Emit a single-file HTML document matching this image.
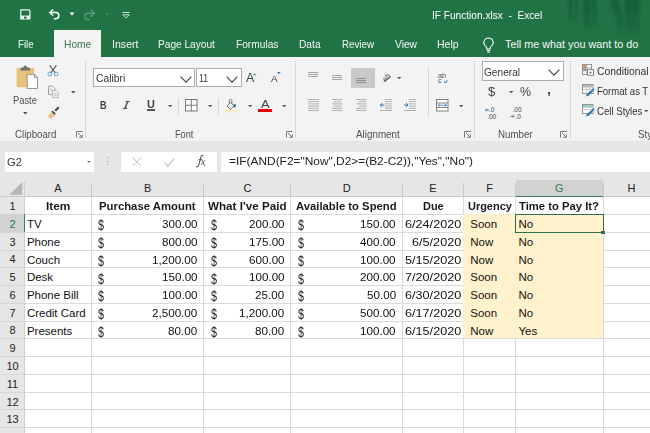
<!DOCTYPE html><html><head><meta charset="utf-8"><style>
*{margin:0;padding:0;box-sizing:border-box}
html,body{width:650px;height:433px;overflow:hidden;background:#fff;font-family:"Liberation Sans",sans-serif;position:relative}
.a{position:absolute}
.t{position:absolute;white-space:nowrap;line-height:1;transform-origin:0 0}
svg{position:absolute;overflow:visible}
</style></head><body><div class="a" style="left:0.00px;top:0.00px;width:650.00px;height:57.00px;background:#217346"></div>
<svg style="left:540px;top:0px" width="110" height="57" viewBox="0 0 110 57"><defs><linearGradient id="fd" x1="0" y1="0" x2="0" y2="1"><stop offset="0" stop-color="#0d3d22" stop-opacity="0.35"/><stop offset="0.7" stop-color="#0d3d22" stop-opacity="0.18"/><stop offset="1" stop-color="#0d3d22" stop-opacity="0"/></linearGradient><filter id="bl"><feGaussianBlur stdDeviation="0.8"/></filter></defs><g filter="url(#bl)" fill="url(#fd)"><rect x="28" y="0" width="10" height="24"/><rect x="33" y="0" width="2" height="20" fill="#2a8050" fill-opacity="0.3"/><rect x="43" y="0" width="8" height="34"/><rect x="52" y="0" width="5" height="30"/><path d="M70 0h8l6 18v20h-6l-2-18z"/><path d="M84 0h16v39h-14z"/></g></svg>
<svg style="left:19.5px;top:8.5px" width="11" height="11" viewBox="0 0 11 11"><path d="M0.8 0.8h8.2l0.9 0.9v8.2H0.8z" fill="none" stroke="#eef7f1" stroke-width="1.2"/><path d="M1 6.6h8.6v3.2H1z" fill="#eef7f1"/><rect x="4" y="7.6" width="2.6" height="2" fill="#217346"/></svg>
<svg style="left:48px;top:8px" width="13" height="12" viewBox="0 0 13 12"><path d="M2.5 4.5h5.3a3.1 3.1 0 0 1 0 6.2h-2" fill="none" stroke="#fff" stroke-width="1.5"/><path d="M5.1 1.5L1.8 4.5l3.3 3" fill="none" stroke="#fff" stroke-width="1.5"/></svg>
<svg style="left:69px;top:12px" width="6" height="4" viewBox="0 0 6 4"><path d="M0.5 0.5h5l-2.5 3z" fill="#fff"/></svg>
<svg style="left:84px;top:8px" width="12" height="12" viewBox="0 0 12 12"><path d="M9.5 5.2h-5.5a3.2 3.2 0 0 0 0 6.4h2" fill="none" stroke="#5a9c78" stroke-width="1.4"/><path d="M6.6 1.6l3.8 3.6l-3.8 3.6" fill="none" stroke="#5a9c78" stroke-width="1.4"/></svg>
<svg style="left:105px;top:12.5px" width="5" height="3" viewBox="0 0 5 3"><path d="M0.5 0.5h3.5l-1.75 2z" fill="#4f9270"/></svg>
<svg style="left:121.5px;top:12px" width="9" height="7" viewBox="0 0 9 7"><path d="M0.3 0.5h7.6" stroke="#d6e8dc" stroke-width="0.9"/><path d="M0.8 2.8h6.6l-3.3 3.3z" fill="none" stroke="#d6e8dc" stroke-width="0.9"/></svg>
<div class="t" style="left:431.70px;top:9.69px;font-size:11px;color:#fff;transform:scaleX(0.9199);">IF Function.xlsx&nbsp; - &nbsp;Excel</div>
<div class="a" style="left:54.00px;top:29.80px;width:47.00px;height:27.50px;background:#f3f3f3"></div>
<div class="t" style="left:18.40px;top:39.06px;font-size:10.8px;color:#f4f8f5;transform:scaleX(0.8966);">File</div>
<div class="t" style="left:63.70px;top:39.06px;font-size:10.8px;color:#3b7453;transform:scaleX(0.9479);">Home</div>
<div class="t" style="left:111.50px;top:39.06px;font-size:10.8px;color:#f4f8f5;transform:scaleX(0.9815);">Insert</div>
<div class="t" style="left:158.20px;top:39.06px;font-size:10.8px;color:#f4f8f5;transform:scaleX(0.9382);">Page Layout</div>
<div class="t" style="left:236.00px;top:39.06px;font-size:10.8px;color:#f4f8f5;transform:scaleX(0.9422);">Formulas</div>
<div class="t" style="left:299.20px;top:39.06px;font-size:10.8px;color:#f4f8f5;transform:scaleX(0.9453);">Data</div>
<div class="t" style="left:342.00px;top:39.06px;font-size:10.8px;color:#f4f8f5;transform:scaleX(0.9027);">Review</div>
<div class="t" style="left:394.80px;top:39.06px;font-size:10.8px;color:#f4f8f5;transform:scaleX(0.9462);">View</div>
<div class="t" style="left:437.20px;top:39.06px;font-size:10.8px;color:#f4f8f5;transform:scaleX(0.9730);">Help</div>
<svg style="left:482px;top:37px" width="13" height="16" viewBox="0 0 13 16"><path d="M6.5 1a4.6 4.6 0 0 0-2.6 8.4c.6.5.9 1.2.9 2v.6h3.4v-.6c0-.8.3-1.5.9-2A4.6 4.6 0 0 0 6.5 1z" fill="none" stroke="#fff" stroke-width="1.1"/><path d="M4.9 13.6h3.2M5.3 15.2h2.4" stroke="#fff" stroke-width="1.1"/></svg>
<div class="t" style="left:505.00px;top:39.06px;font-size:10.8px;color:#f4f8f5;">Tell me what you want to do</div>
<div class="a" style="left:0.00px;top:57.00px;width:650.00px;height:84.00px;background:#f3f3f3"></div>
<div class="a" style="left:85.00px;top:61.00px;width:1.00px;height:77.00px;background:#d6d6d6"></div>
<div class="a" style="left:295.00px;top:61.00px;width:1.00px;height:77.00px;background:#d6d6d6"></div>
<div class="a" style="left:474.00px;top:61.00px;width:1.00px;height:77.00px;background:#d6d6d6"></div>
<div class="a" style="left:570.00px;top:61.00px;width:1.00px;height:77.00px;background:#d6d6d6"></div>
<svg style="left:16px;top:65px" width="23" height="25" viewBox="0 0 23 25"><rect x="0.6" y="3" width="17.4" height="19.2" fill="#e8c17a"/><path d="M4.2 5.6l0.8-3h8.6l0.8 3z" fill="#6f6f6f"/><rect x="7.6" y="0.8" width="3.2" height="2.2" rx="0.6" fill="#6f6f6f"/><path d="M11.2 9.3h7.2l3.1 3.1v11.1h-10.3z" fill="#fff" stroke="#8a8a8a" stroke-width="0.9"/><path d="M18.4 9.3v3.1h3.1" fill="none" stroke="#8a8a8a" stroke-width="0.9"/></svg>
<div class="t" style="left:13.20px;top:94.96px;font-size:10.8px;color:#505050;transform:scaleX(0.8659);">Paste</div>
<svg style="left:23px;top:112px" width="5" height="3" viewBox="0 0 5 3"><path d="M0 0h4.6l-2.3 2.4z" fill="#555"/></svg>
<svg style="left:47px;top:65px" width="12" height="12" viewBox="0 0 12 12"><path d="M2.6 0.4l5.8 7.6M9.4 0.4L3.6 8" stroke="#555" stroke-width="1.1"/><circle cx="2.8" cy="9" r="1.9" fill="none" stroke="#5b9bd5" stroke-width="0.9"/><circle cx="9.2" cy="9" r="1.9" fill="none" stroke="#5b9bd5" stroke-width="0.9"/></svg>
<svg style="left:47px;top:85px" width="13" height="14" viewBox="0 0 13 14"><path d="M1.5 1.2h4.3l2 2v6.3H1.5z" fill="#f8f8f8" stroke="#999" stroke-width="0.9"/><path d="M2.5 4.2h3M2.5 6.2h3" stroke="#aaa" stroke-width="0.7"/><path d="M5.6 5.4h3.8l2 2v5.2H5.6z" fill="#f4f4f4" stroke="#a6b8b0" stroke-width="0.9"/><path d="M6.6 8.6h3.6M6.6 10.6h3.6" stroke="#aab" stroke-width="0.7"/></svg>
<svg style="left:70.5px;top:91px" width="5" height="3" viewBox="0 0 5 3"><path d="M0 0h4.6l-2.3 2.4z" fill="#555"/></svg>
<svg style="left:47px;top:106px" width="13" height="13" viewBox="0 0 13 13"><path d="M8.2 4.8l3.6-3.6" stroke="#505050" stroke-width="2.3"/><path d="M5.6 4.4l3.2 3.2l-1.6 1.6l-3.2-3.2z" fill="#505050"/><path d="M0.8 10.2l3.8-4.4l3.4 3.4l-4.4 3.8z" fill="#eac27c"/></svg>
<div class="t" style="left:15.00px;top:128.56px;font-size:10.8px;color:#505050;transform:scaleX(0.8973);">Clipboard</div>
<svg style="left:76px;top:131px" width="7" height="7" viewBox="0 0 7 7"><path d="M0.5 6.5V0.5h6" fill="none" stroke="#777" stroke-width="1"/><path d="M2 2l4 4M3.3 6.3h3v-3" fill="none" stroke="#777" stroke-width="1"/></svg>
<div class="a" style="left:93.30px;top:68.30px;width:101.50px;height:19.20px;background:#fff;border:1px solid #ababab"></div>
<div class="a" style="left:195.60px;top:68.30px;width:46.00px;height:19.20px;background:#fff;border:1px solid #ababab"></div>
<div class="t" style="left:96.00px;top:73.46px;font-size:10.8px;color:#333;transform:scaleX(0.9542);">Calibri</div>
<div class="t" style="left:199.00px;top:73.46px;font-size:10.8px;color:#333;transform:scaleX(0.8036);">11</div>
<svg style="left:180.4px;top:76px" width="12" height="7" viewBox="0 0 12 7"><path d="M0.6 0.6l5.4 5.6l5.4-5.6" fill="none" stroke="#444" stroke-width="1.1"/></svg>
<svg style="left:226px;top:76px" width="12" height="7" viewBox="0 0 12 7"><path d="M0.6 0.6l5.4 5.6l5.4-5.6" fill="none" stroke="#444" stroke-width="1.1"/></svg>
<div class="t" style="left:246.00px;top:72.27px;font-size:12.2px;color:#444;transform:scaleX(1.0184);">A</div>
<svg style="left:252.8px;top:72.6px" width="4" height="3" viewBox="0 0 4 3"><path d="M0 2.2l1.8-1.9l1.8 1.9z" fill="#3c9c8c"/></svg>
<div class="t" style="left:270.50px;top:74.47px;font-size:9.6px;color:#444;transform:scaleX(1.0312);">A</div>
<svg style="left:276.5px;top:72.4px" width="4" height="3" viewBox="0 0 4 3"><path d="M0 0h3.8l-1.9 2z" fill="#2e75b6"/></svg>
<div class="t" style="left:99.70px;top:99.81px;font-size:10.5px;color:#444;font-weight:bold;transform:scaleX(0.8684);">B</div>
<svg style="left:123px;top:101px" width="7" height="8" viewBox="0 0 7 8"><path d="M4.6 0.4L2 7.6" stroke="#555" stroke-width="1.5"/><path d="M2.6 0.6h4M0.2 7.4h4" stroke="#555" stroke-width="1.1"/></svg>
<div class="t" style="left:146.50px;top:99.31px;font-size:10.5px;color:#444;font-weight:bold;transform:scaleX(1.0395);">U</div>
<div class="a" style="left:146.50px;top:109.40px;width:8.00px;height:1.20px;background:#555"></div>
<svg style="left:167.5px;top:105px" width="5" height="3" viewBox="0 0 5 3"><path d="M0 0h4.4l-2.2 2.2z" fill="#555"/></svg>
<div class="a" style="left:178.00px;top:97.50px;width:1.00px;height:17.00px;background:#d6d6d6"></div>
<svg style="left:184.5px;top:99px" width="13" height="13" viewBox="0 0 13 13"><rect x="0.5" y="0.5" width="11.5" height="11.5" fill="#fff" stroke="#777" stroke-width="1"/><path d="M6.25 0.5v11.5M0.5 6.25h11.5" stroke="#777" stroke-width="1"/></svg>
<svg style="left:207.7px;top:105px" width="5" height="3" viewBox="0 0 5 3"><path d="M0 0h4.4l-2.2 2.2z" fill="#555"/></svg>
<div class="a" style="left:218.00px;top:97.50px;width:1.00px;height:17.00px;background:#d6d6d6"></div>
<svg style="left:223px;top:98px" width="16" height="15" viewBox="0 0 16 15"><path d="M4 8l3.5-3.5l3.5 3.5l-3.5 3.5z" fill="#fff" stroke="#5a5a5a" stroke-width="0.9"/><path d="M6.3 5.6V2.8a1.3 1.3 0 0 1 2.6 0V6.4" fill="none" stroke="#666" stroke-width="0.9"/><ellipse cx="11.8" cy="7.8" rx="1.2" ry="2" fill="#2f8a8a"/><rect x="1" y="12" width="14" height="2.2" fill="#fef0c4"/></svg>
<svg style="left:247.7px;top:105px" width="5" height="3" viewBox="0 0 5 3"><path d="M0 0h4.4l-2.2 2.2z" fill="#555"/></svg>
<div class="t" style="left:260.60px;top:99.41px;font-size:10.5px;color:#444;transform:scaleX(1.2286);">A</div>
<div class="a" style="left:257.70px;top:108.90px;width:14.30px;height:3.20px;background:#e00000"></div>
<svg style="left:281.7px;top:105px" width="5" height="3" viewBox="0 0 5 3"><path d="M0 0h4.4l-2.2 2.2z" fill="#555"/></svg>
<div class="t" style="left:174.80px;top:128.86px;font-size:10.8px;color:#505050;transform:scaleX(0.8519);">Font</div>
<svg style="left:286px;top:131px" width="7" height="7" viewBox="0 0 7 7"><path d="M0.5 6.5V0.5h6" fill="none" stroke="#777" stroke-width="1"/><path d="M2 2l4 4M3.3 6.3h3v-3" fill="none" stroke="#777" stroke-width="1"/></svg>
<div class="a" style="left:351.30px;top:67.90px;width:23.50px;height:19.80px;background:#c9c9c9"></div>
<svg style="left:308px;top:72px" width="12" height="6" viewBox="0 0 12 6"><path d="M0 0.5h10M0 2.5h10M0 4.5h10" stroke="#9a9a9a" stroke-width="0.9"/></svg>
<svg style="left:332.2px;top:75px" width="12" height="6" viewBox="0 0 12 6"><path d="M0 0.5h10M0 2.5h10M0 4.5h10" stroke="#9a9a9a" stroke-width="0.9"/></svg>
<svg style="left:355.8px;top:78px" width="12" height="6" viewBox="0 0 12 6"><path d="M0 0.5h10M0 2.5h10M0 4.5h10" stroke="#888" stroke-width="0.9"/></svg>
<svg style="left:380px;top:71px" width="13" height="13" viewBox="0 0 13 13"><text x="1.5" y="9" font-size="7.5" font-family="Liberation Sans" fill="#555" transform="rotate(-45 6 6)">ab</text><path d="M3.7 10.7L10.9 5.8" stroke="#555" stroke-width="1"/></svg>
<svg style="left:396.7px;top:77px" width="5" height="3" viewBox="0 0 5 3"><path d="M0 0h4.4l-2.2 2.2z" fill="#555"/></svg>
<div class="t" style="left:437.90px;top:71.74px;font-size:7.4px;color:#555;transform:scaleX(0.9939);">ab</div>
<svg style="left:437.5px;top:78px" width="11" height="6" viewBox="0 0 11 6"><text x="0" y="5.2" font-size="7.4" font-family="Liberation Sans" fill="#555">c</text><path d="M8.8 2v2.2h-2.6M7.1 3.3l-0.9 0.9l0.9 0.9" fill="none" stroke="#2e75b6" stroke-width="0.8"/></svg>
<svg style="left:307.5px;top:98.8px" width="12" height="12" viewBox="0 0 12 12"><path d="M0 0.5h11" stroke="#a0a0a0" stroke-width="0.8"/><path d="M0 2.7h11" stroke="#a0a0a0" stroke-width="0.8"/><path d="M0 4.9h11" stroke="#a0a0a0" stroke-width="0.8"/><path d="M0 7.1h11" stroke="#a0a0a0" stroke-width="0.8"/><path d="M0 9.3h11" stroke="#a0a0a0" stroke-width="0.8"/><path d="M0 11.5h11" stroke="#a0a0a0" stroke-width="0.8"/></svg>
<svg style="left:331.8px;top:98.8px" width="12" height="12" viewBox="0 0 12 12"><path d="M0 0.5h10.5" stroke="#a0a0a0" stroke-width="0.8"/><path d="M1.5 2.7h7.5" stroke="#a0a0a0" stroke-width="0.8"/><path d="M0 4.9h10.5" stroke="#a0a0a0" stroke-width="0.8"/><path d="M1.5 7.1h7.5" stroke="#a0a0a0" stroke-width="0.8"/><path d="M0 9.3h10.5" stroke="#a0a0a0" stroke-width="0.8"/><path d="M0 11.5h10.5" stroke="#a0a0a0" stroke-width="0.8"/></svg>
<svg style="left:355.8px;top:98.8px" width="12" height="12" viewBox="0 0 12 12"><path d="M0 0.5h10.5" stroke="#a0a0a0" stroke-width="0.8"/><path d="M3 2.7h7.5" stroke="#a0a0a0" stroke-width="0.8"/><path d="M0 4.9h10.5" stroke="#a0a0a0" stroke-width="0.8"/><path d="M3 7.1h7.5" stroke="#a0a0a0" stroke-width="0.8"/><path d="M0 9.3h10.5" stroke="#a0a0a0" stroke-width="0.8"/><path d="M0 11.5h10.5" stroke="#a0a0a0" stroke-width="0.8"/></svg>
<svg style="left:380px;top:98.8px" width="13" height="12" viewBox="0 0 13 12"><path d="M5 0.5h7M5 2.7h7M5 4.9h7M5 7.1h7M5 9.3h7M0 11.5h12" stroke="#a0a0a0" stroke-width="0.8"/><path d="M0.3 6h4M2.3 4l-2 2l2 2" fill="none" stroke="#2e75b6" stroke-width="1"/></svg>
<svg style="left:404px;top:98.8px" width="13" height="12" viewBox="0 0 13 12"><path d="M5 0.5h7M5 2.7h7M5 4.9h7M5 7.1h7M5 9.3h7M0 11.5h12" stroke="#a0a0a0" stroke-width="0.8"/><path d="M0 6h4M2 4l2 2l-2 2" fill="none" stroke="#2e75b6" stroke-width="1"/></svg>
<div class="a" style="left:428.30px;top:67.00px;width:1.00px;height:50.00px;background:#d6d6d6"></div>
<svg style="left:435.6px;top:98.8px" width="13" height="13" viewBox="0 0 13 13"><rect x="0.5" y="0.5" width="11.5" height="11.5" fill="#fff" stroke="#777" stroke-width="0.9"/><path d="M0.5 4h11.5M0.5 8.5h11.5" stroke="#777" stroke-width="0.9"/><path d="M2 6.25h8.5M3.5 5l-1.5 1.25l1.5 1.25M9 5l1.5 1.25l-1.5 1.25" fill="none" stroke="#2e75b6" stroke-width="0.8"/></svg>
<svg style="left:459px;top:105px" width="5" height="3" viewBox="0 0 5 3"><path d="M0 0h4.4l-2.2 2.2z" fill="#555"/></svg>
<div class="t" style="left:356.40px;top:128.56px;font-size:10.8px;color:#505050;transform:scaleX(0.9116);">Alignment</div>
<svg style="left:464px;top:131px" width="7" height="7" viewBox="0 0 7 7"><path d="M0.5 6.5V0.5h6" fill="none" stroke="#777" stroke-width="1"/><path d="M2 2l4 4M3.3 6.3h3v-3" fill="none" stroke="#777" stroke-width="1"/></svg>
<div class="a" style="left:481.90px;top:61.10px;width:81.70px;height:19.70px;background:#fff;border:1px solid #ababab"></div>
<div class="t" style="left:484.40px;top:66.66px;font-size:10.8px;color:#333;transform:scaleX(0.9375);">General</div>
<svg style="left:548px;top:68.5px" width="12" height="7" viewBox="0 0 12 7"><path d="M0.6 0.6l5.4 5.6l5.4-5.6" fill="none" stroke="#444" stroke-width="1.1"/></svg>
<div class="t" style="left:488.00px;top:85.92px;font-size:12.5px;color:#444;transform:scaleX(1.0360);">$</div>
<svg style="left:508.8px;top:90.5px" width="5" height="3" viewBox="0 0 5 3"><path d="M0 0h4.4l-2.2 2.2z" fill="#555"/></svg>
<div class="t" style="left:519.80px;top:86.34px;font-size:12px;color:#444;transform:scaleX(1.0329);">%</div>
<div class="t" style="left:546.50px;top:82.50px;font-size:13px;color:#444;font-weight:bold;transform:scaleX(1.1111);">,</div>
<svg style="left:485px;top:105.5px" width="14" height="14" viewBox="0 0 14 14"><text x="4" y="5.8" font-size="6.5" font-family="Liberation Sans" fill="#444">.0</text><text x="2.2" y="12.5" font-size="6.5" font-family="Liberation Sans" fill="#444">.00</text><path d="M0.5 4h3.5M1.8 2.6L0.5 4l1.3 1.4" fill="none" stroke="#2e75b6" stroke-width="0.9"/></svg>
<svg style="left:510px;top:105.5px" width="14" height="14" viewBox="0 0 14 14"><text x="2.5" y="5.8" font-size="6.5" font-family="Liberation Sans" fill="#444">.00</text><text x="5.5" y="12.5" font-size="6.5" font-family="Liberation Sans" fill="#444">.0</text><path d="M0.5 10.3h3.5M2.7 8.9L4 10.3l-1.3 1.4" fill="none" stroke="#2e75b6" stroke-width="0.9"/></svg>
<div class="t" style="left:497.70px;top:128.86px;font-size:10.8px;color:#505050;transform:scaleX(0.9010);">Number</div>
<svg style="left:560px;top:131px" width="7" height="7" viewBox="0 0 7 7"><path d="M0.5 6.5V0.5h6" fill="none" stroke="#777" stroke-width="1"/><path d="M2 2l4 4M3.3 6.3h3v-3" fill="none" stroke="#777" stroke-width="1"/></svg>
<svg style="left:582px;top:64px" width="12" height="12" viewBox="0 0 12 12"><rect x="0.5" y="0.5" width="9" height="10" fill="#fff" stroke="#8a8a8a" stroke-width="0.9"/><rect x="1" y="1" width="3.5" height="3" fill="#d99a4e"/><rect x="1" y="4.2" width="3.5" height="3" fill="#8aa0b4"/><path d="M0.5 3.9h9M4.8 0.5v10" stroke="#9a9a9a" stroke-width="0.7"/><rect x="5.5" y="5.6" width="6" height="5.6" fill="#fff" stroke="#777" stroke-width="0.9"/><rect x="7.7" y="7.7" width="1.6" height="1.6" fill="#444"/></svg>
<div class="t" style="left:597.40px;top:65.69px;font-size:11px;color:#333;transform:scaleX(0.9373);">Conditional</div>
<svg style="left:582px;top:84px" width="13" height="13" viewBox="0 0 13 13"><rect x="0.5" y="0.5" width="10.5" height="9" fill="#fff" stroke="#8a8a8a" stroke-width="0.9"/><rect x="1" y="1" width="9.5" height="2.4" fill="#b8b8b8"/><path d="M0.5 5.6h10.5M4 0.5v9M7.5 0.5v9" stroke="#b5b5b5" stroke-width="0.7"/><path d="M3.6 12.4l1.6-2.6l6.4-5.6l1 1l-5.6 6.4z" fill="#2e75b6"/></svg>
<div class="t" style="left:597.40px;top:85.99px;font-size:11px;color:#333;transform:scaleX(0.8663);">Format as T</div>
<svg style="left:582px;top:104px" width="13" height="13" viewBox="0 0 13 13"><rect x="0.5" y="0.5" width="10.5" height="9" fill="#fff" stroke="#8a8a8a" stroke-width="0.9"/><rect x="1" y="1" width="9.5" height="2.6" fill="#9fc7bd"/><path d="M0.5 5.6h10.5" stroke="#b5b5b5" stroke-width="0.7"/><path d="M3.6 12.4l1.6-2.6l6.4-5.6l1 1l-5.6 6.4z" fill="#2e75b6"/></svg>
<div class="t" style="left:597.40px;top:105.99px;font-size:11px;color:#333;transform:scaleX(0.8739);">Cell Styles</div>
<svg style="left:644px;top:110px" width="5" height="3" viewBox="0 0 5 3"><path d="M0 0h4.4l-2.2 2.2z" fill="#555"/></svg>
<div class="t" style="left:638.40px;top:128.86px;font-size:10.8px;color:#505050;transform:scaleX(0.8974);">Sty</div>
<div class="a" style="left:0.00px;top:141.00px;width:650.00px;height:56.00px;background:#e6e6e6"></div>
<div class="a" style="left:4.60px;top:151.80px;width:89.50px;height:19.80px;background:#fff"></div>
<div class="t" style="left:7.40px;top:156.56px;font-size:10.8px;color:#333;transform:scaleX(1.0278);">G2</div>
<svg style="left:87px;top:160.5px" width="4" height="2" viewBox="0 0 4 2"><path d="M0 0h3.8l-1.9 1.8z" fill="#666"/></svg>
<div class="a" style="left:106.50px;top:157.00px;width:1.20px;height:1.20px;background:#999"></div>
<div class="a" style="left:106.50px;top:160.50px;width:1.20px;height:1.20px;background:#999"></div>
<div class="a" style="left:106.50px;top:164.00px;width:1.20px;height:1.20px;background:#999"></div>
<div class="a" style="left:121.00px;top:151.80px;width:96.00px;height:19.80px;background:#fff"></div>
<svg style="left:132px;top:157px" width="10" height="10" viewBox="0 0 10 10"><path d="M0.5 0.5l8.5 8.5M9 0.5L0.5 9" stroke="#bbb" stroke-width="1"/></svg>
<svg style="left:163.5px;top:158px" width="11" height="9" viewBox="0 0 11 9"><path d="M0.5 4.5l3.2 3.6L10.3 0.6" fill="none" stroke="#bbb" stroke-width="1.1"/></svg>
<svg style="left:195px;top:154px" width="12" height="14" viewBox="0 0 12 14"><path d="M1.2 12.4c1.2 0.6 2 0.2 2.5-1.2l2.3-8.4c0.4-1.3 1.2-1.6 2.4-1.1" fill="none" stroke="#555" stroke-width="1.1"/><path d="M3.6 5.6h3.4" stroke="#555" stroke-width="0.9"/><path d="M6.2 6.2c0.8-0.3 1.2 0 1.5 1l1.4 3.6c0.3 0.8 0.7 1 1.3 0.7M10 6.3l-3.8 4.6" fill="none" stroke="#555" stroke-width="0.9"/></svg>
<div class="a" style="left:220.50px;top:151.80px;width:440.00px;height:19.80px;background:#fff"></div>
<div class="t" style="left:229.00px;top:155.77px;font-size:11.5px;color:#222;transform:scaleX(1.0357);">=IF(AND(F2="Now",D2&gt;=(B2-C2)),"Yes","No")</div>
<div class="a" style="left:0.00px;top:196.50px;width:24.50px;height:240.00px;background:#e6e6e6"></div>
<div class="a" style="left:24.50px;top:196.50px;width:640.00px;height:240.00px;background:#fff"></div>
<div class="a" style="left:91.00px;top:196.00px;width:1.00px;height:240.00px;background:#dadada"></div>
<div class="a" style="left:91.00px;top:183.00px;width:1.00px;height:13.00px;background:#c8c8c8"></div>
<div class="a" style="left:203.00px;top:196.00px;width:1.00px;height:240.00px;background:#dadada"></div>
<div class="a" style="left:203.00px;top:183.00px;width:1.00px;height:13.00px;background:#c8c8c8"></div>
<div class="a" style="left:290.00px;top:196.00px;width:1.00px;height:240.00px;background:#dadada"></div>
<div class="a" style="left:290.00px;top:183.00px;width:1.00px;height:13.00px;background:#c8c8c8"></div>
<div class="a" style="left:402.00px;top:196.00px;width:1.00px;height:240.00px;background:#dadada"></div>
<div class="a" style="left:402.00px;top:183.00px;width:1.00px;height:13.00px;background:#c8c8c8"></div>
<div class="a" style="left:463.00px;top:196.00px;width:1.00px;height:240.00px;background:#dadada"></div>
<div class="a" style="left:463.00px;top:183.00px;width:1.00px;height:13.00px;background:#c8c8c8"></div>
<div class="a" style="left:515.00px;top:196.00px;width:1.00px;height:240.00px;background:#dadada"></div>
<div class="a" style="left:515.00px;top:183.00px;width:1.00px;height:13.00px;background:#c8c8c8"></div>
<div class="a" style="left:603.00px;top:196.00px;width:1.00px;height:240.00px;background:#dadada"></div>
<div class="a" style="left:603.00px;top:183.00px;width:1.00px;height:13.00px;background:#c8c8c8"></div>
<div class="a" style="left:24.00px;top:182.00px;width:1.00px;height:251.00px;background:#cfcfcf"></div>
<div class="a" style="left:0.00px;top:196.00px;width:650.00px;height:1.00px;background:#c8c8c8"></div>
<div class="a" style="left:25.00px;top:214.00px;width:640.00px;height:1.00px;background:#dadada"></div>
<div class="a" style="left:0.00px;top:214.00px;width:24.00px;height:1.00px;background:#d6d6d6"></div>
<div class="a" style="left:25.00px;top:232.00px;width:640.00px;height:1.00px;background:#dadada"></div>
<div class="a" style="left:0.00px;top:232.00px;width:24.00px;height:1.00px;background:#d6d6d6"></div>
<div class="a" style="left:25.00px;top:250.00px;width:640.00px;height:1.00px;background:#dadada"></div>
<div class="a" style="left:0.00px;top:250.00px;width:24.00px;height:1.00px;background:#d6d6d6"></div>
<div class="a" style="left:25.00px;top:267.00px;width:640.00px;height:1.00px;background:#dadada"></div>
<div class="a" style="left:0.00px;top:267.00px;width:24.00px;height:1.00px;background:#d6d6d6"></div>
<div class="a" style="left:25.00px;top:285.00px;width:640.00px;height:1.00px;background:#dadada"></div>
<div class="a" style="left:0.00px;top:285.00px;width:24.00px;height:1.00px;background:#d6d6d6"></div>
<div class="a" style="left:25.00px;top:303.00px;width:640.00px;height:1.00px;background:#dadada"></div>
<div class="a" style="left:0.00px;top:303.00px;width:24.00px;height:1.00px;background:#d6d6d6"></div>
<div class="a" style="left:25.00px;top:321.00px;width:640.00px;height:1.00px;background:#dadada"></div>
<div class="a" style="left:0.00px;top:321.00px;width:24.00px;height:1.00px;background:#d6d6d6"></div>
<div class="a" style="left:25.00px;top:338.00px;width:640.00px;height:1.00px;background:#dadada"></div>
<div class="a" style="left:0.00px;top:338.00px;width:24.00px;height:1.00px;background:#d6d6d6"></div>
<div class="a" style="left:25.00px;top:356.00px;width:640.00px;height:1.00px;background:#dadada"></div>
<div class="a" style="left:0.00px;top:356.00px;width:24.00px;height:1.00px;background:#d6d6d6"></div>
<div class="a" style="left:25.00px;top:374.00px;width:640.00px;height:1.00px;background:#dadada"></div>
<div class="a" style="left:0.00px;top:374.00px;width:24.00px;height:1.00px;background:#d6d6d6"></div>
<div class="a" style="left:25.00px;top:392.00px;width:640.00px;height:1.00px;background:#dadada"></div>
<div class="a" style="left:0.00px;top:392.00px;width:24.00px;height:1.00px;background:#d6d6d6"></div>
<div class="a" style="left:25.00px;top:409.00px;width:640.00px;height:1.00px;background:#dadada"></div>
<div class="a" style="left:0.00px;top:409.00px;width:24.00px;height:1.00px;background:#d6d6d6"></div>
<div class="a" style="left:25.00px;top:427.00px;width:640.00px;height:1.00px;background:#dadada"></div>
<div class="a" style="left:0.00px;top:427.00px;width:24.00px;height:1.00px;background:#d6d6d6"></div>
<div class="a" style="left:25.00px;top:445.00px;width:640.00px;height:1.00px;background:#dadada"></div>
<div class="a" style="left:0.00px;top:445.00px;width:24.00px;height:1.00px;background:#d6d6d6"></div>
<div class="a" style="left:463.00px;top:214.00px;width:140.00px;height:124.00px;background:#fff2cc"></div>
<svg style="left:9px;top:182px" width="14" height="13" viewBox="0 0 14 13"><path d="M13.2 0.2V12.7H0.2z" fill="#b5b5b5"/></svg>
<div class="t" style="left:54.23px;top:183.19px;font-size:11px;color:#222;">A</div>
<div class="t" style="left:143.97px;top:183.19px;font-size:11px;color:#222;">B</div>
<div class="t" style="left:243.53px;top:183.19px;font-size:11px;color:#222;">C</div>
<div class="t" style="left:342.67px;top:183.19px;font-size:11px;color:#222;">D</div>
<div class="t" style="left:429.22px;top:183.19px;font-size:11px;color:#222;">E</div>
<div class="t" style="left:486.15px;top:183.19px;font-size:11px;color:#222;">F</div>
<div class="a" style="left:515.50px;top:180.00px;width:87.50px;height:16.50px;background:#d2d2d2;border-bottom:1.5px solid #3b7d57"></div>
<div class="t" style="left:554.98px;top:183.19px;font-size:11px;color:#3f7a58;">G</div>
<div class="t" style="left:627.52px;top:183.19px;font-size:11px;color:#222;">H</div>
<div class="t" style="left:9.45px;top:201.09px;font-size:11px;color:#222;">1</div>
<div class="a" style="left:0.00px;top:214.27px;width:24.50px;height:17.77px;background:#d2d2d2;border-right:1.5px solid #3b7d57"></div>
<div class="t" style="left:9.45px;top:218.86px;font-size:11px;color:#217346;">2</div>
<div class="t" style="left:9.45px;top:236.63px;font-size:11px;color:#222;">3</div>
<div class="t" style="left:9.45px;top:254.40px;font-size:11px;color:#222;">4</div>
<div class="t" style="left:9.45px;top:272.17px;font-size:11px;color:#222;">5</div>
<div class="t" style="left:9.45px;top:289.94px;font-size:11px;color:#222;">6</div>
<div class="t" style="left:9.45px;top:307.71px;font-size:11px;color:#222;">7</div>
<div class="t" style="left:9.45px;top:325.48px;font-size:11px;color:#222;">8</div>
<div class="t" style="left:9.45px;top:343.25px;font-size:11px;color:#222;">9</div>
<div class="t" style="left:6.38px;top:361.02px;font-size:11px;color:#222;">10</div>
<div class="t" style="left:6.80px;top:378.79px;font-size:11px;color:#222;">11</div>
<div class="t" style="left:6.38px;top:396.56px;font-size:11px;color:#222;">12</div>
<div class="t" style="left:6.38px;top:414.33px;font-size:11px;color:#222;">13</div>
<div class="t" style="left:45.70px;top:201.37px;font-size:11.5px;color:#1a1a1a;font-weight:bold;transform:scaleX(1.0317);">Item</div>
<div class="t" style="left:99.35px;top:201.37px;font-size:11.5px;color:#1a1a1a;font-weight:bold;transform:scaleX(0.9857);">Purchase Amount</div>
<div class="t" style="left:208.25px;top:201.37px;font-size:11.5px;color:#1a1a1a;font-weight:bold;transform:scaleX(1.0129);">What I&#39;ve Paid</div>
<div class="t" style="left:296.35px;top:201.37px;font-size:11.5px;color:#1a1a1a;font-weight:bold;transform:scaleX(0.9819);">Available to Spend</div>
<div class="t" style="left:422.55px;top:201.37px;font-size:11.5px;color:#1a1a1a;font-weight:bold;transform:scaleX(0.9517);">Due</div>
<div class="t" style="left:467.60px;top:201.37px;font-size:11.5px;color:#1a1a1a;font-weight:bold;transform:scaleX(0.9522);">Urgency</div>
<div class="t" style="left:519.25px;top:201.37px;font-size:11.5px;color:#1a1a1a;font-weight:bold;transform:scaleX(0.9804);">Time to Pay It?</div>
<div class="t" style="left:26.90px;top:219.14px;font-size:11.5px;color:#111;">TV</div>
<div class="t" style="left:98.30px;top:218.22px;font-size:14px;color:#1a1a1a;transform:scaleX(0.7692);">$</div>
<div class="t" style="left:161.88px;top:219.14px;font-size:11.5px;color:#111;transform:scaleX(1.0120);">300.00</div>
<div class="t" style="left:211.00px;top:218.22px;font-size:14px;color:#1a1a1a;transform:scaleX(0.7692);">$</div>
<div class="t" style="left:248.88px;top:219.14px;font-size:11.5px;color:#111;transform:scaleX(1.0120);">200.00</div>
<div class="t" style="left:298.00px;top:218.22px;font-size:14px;color:#1a1a1a;transform:scaleX(0.7692);">$</div>
<div class="t" style="left:360.18px;top:219.14px;font-size:11.5px;color:#111;transform:scaleX(1.0120);">150.00</div>
<div class="t" style="left:404.74px;top:219.14px;font-size:11.5px;color:#111;transform:scaleX(1.1000);">6/24/2020</div>
<div class="t" style="left:470.30px;top:219.14px;font-size:11.5px;color:#111;">Soon</div>
<div class="t" style="left:518.50px;top:219.14px;font-size:11.5px;color:#111;">No</div>
<div class="t" style="left:26.90px;top:236.91px;font-size:11.5px;color:#111;">Phone</div>
<div class="t" style="left:98.30px;top:235.99px;font-size:14px;color:#1a1a1a;transform:scaleX(0.7692);">$</div>
<div class="t" style="left:161.88px;top:236.91px;font-size:11.5px;color:#111;transform:scaleX(1.0120);">800.00</div>
<div class="t" style="left:211.00px;top:235.99px;font-size:14px;color:#1a1a1a;transform:scaleX(0.7692);">$</div>
<div class="t" style="left:248.88px;top:236.91px;font-size:11.5px;color:#111;transform:scaleX(1.0120);">175.00</div>
<div class="t" style="left:298.00px;top:235.99px;font-size:14px;color:#1a1a1a;transform:scaleX(0.7692);">$</div>
<div class="t" style="left:360.18px;top:236.91px;font-size:11.5px;color:#111;transform:scaleX(1.0120);">400.00</div>
<div class="t" style="left:411.77px;top:236.91px;font-size:11.5px;color:#111;transform:scaleX(1.1000);">6/5/2020</div>
<div class="t" style="left:470.30px;top:236.91px;font-size:11.5px;color:#111;">Now</div>
<div class="t" style="left:518.50px;top:236.91px;font-size:11.5px;color:#111;">No</div>
<div class="t" style="left:26.90px;top:254.68px;font-size:11.5px;color:#111;">Couch</div>
<div class="t" style="left:98.30px;top:253.76px;font-size:14px;color:#1a1a1a;transform:scaleX(0.7692);">$</div>
<div class="t" style="left:152.21px;top:254.68px;font-size:11.5px;color:#111;transform:scaleX(1.0120);">1,200.00</div>
<div class="t" style="left:211.00px;top:253.76px;font-size:14px;color:#1a1a1a;transform:scaleX(0.7692);">$</div>
<div class="t" style="left:248.88px;top:254.68px;font-size:11.5px;color:#111;transform:scaleX(1.0120);">600.00</div>
<div class="t" style="left:298.00px;top:253.76px;font-size:14px;color:#1a1a1a;transform:scaleX(0.7692);">$</div>
<div class="t" style="left:360.18px;top:254.68px;font-size:11.5px;color:#111;transform:scaleX(1.0120);">100.00</div>
<div class="t" style="left:404.74px;top:254.68px;font-size:11.5px;color:#111;transform:scaleX(1.1000);">5/15/2020</div>
<div class="t" style="left:470.30px;top:254.68px;font-size:11.5px;color:#111;">Now</div>
<div class="t" style="left:518.50px;top:254.68px;font-size:11.5px;color:#111;">No</div>
<div class="t" style="left:26.90px;top:272.45px;font-size:11.5px;color:#111;">Desk</div>
<div class="t" style="left:98.30px;top:271.53px;font-size:14px;color:#1a1a1a;transform:scaleX(0.7692);">$</div>
<div class="t" style="left:161.88px;top:272.45px;font-size:11.5px;color:#111;transform:scaleX(1.0120);">150.00</div>
<div class="t" style="left:211.00px;top:271.53px;font-size:14px;color:#1a1a1a;transform:scaleX(0.7692);">$</div>
<div class="t" style="left:248.88px;top:272.45px;font-size:11.5px;color:#111;transform:scaleX(1.0120);">100.00</div>
<div class="t" style="left:298.00px;top:271.53px;font-size:14px;color:#1a1a1a;transform:scaleX(0.7692);">$</div>
<div class="t" style="left:360.18px;top:272.45px;font-size:11.5px;color:#111;transform:scaleX(1.0120);">200.00</div>
<div class="t" style="left:404.74px;top:272.45px;font-size:11.5px;color:#111;transform:scaleX(1.1000);">7/20/2020</div>
<div class="t" style="left:470.30px;top:272.45px;font-size:11.5px;color:#111;">Soon</div>
<div class="t" style="left:518.50px;top:272.45px;font-size:11.5px;color:#111;">No</div>
<div class="t" style="left:26.90px;top:290.22px;font-size:11.5px;color:#111;">Phone Bill</div>
<div class="t" style="left:98.30px;top:289.30px;font-size:14px;color:#1a1a1a;transform:scaleX(0.7692);">$</div>
<div class="t" style="left:161.88px;top:290.22px;font-size:11.5px;color:#111;transform:scaleX(1.0120);">100.00</div>
<div class="t" style="left:211.00px;top:289.30px;font-size:14px;color:#1a1a1a;transform:scaleX(0.7692);">$</div>
<div class="t" style="left:255.35px;top:290.22px;font-size:11.5px;color:#111;transform:scaleX(1.0120);">25.00</div>
<div class="t" style="left:298.00px;top:289.30px;font-size:14px;color:#1a1a1a;transform:scaleX(0.7692);">$</div>
<div class="t" style="left:366.65px;top:290.22px;font-size:11.5px;color:#111;transform:scaleX(1.0120);">50.00</div>
<div class="t" style="left:404.74px;top:290.22px;font-size:11.5px;color:#111;transform:scaleX(1.1000);">6/30/2020</div>
<div class="t" style="left:470.30px;top:290.22px;font-size:11.5px;color:#111;">Soon</div>
<div class="t" style="left:518.50px;top:290.22px;font-size:11.5px;color:#111;">No</div>
<div class="t" style="left:26.90px;top:307.99px;font-size:11.5px;color:#111;">Credit Card</div>
<div class="t" style="left:98.30px;top:307.07px;font-size:14px;color:#1a1a1a;transform:scaleX(0.7692);">$</div>
<div class="t" style="left:152.21px;top:307.99px;font-size:11.5px;color:#111;transform:scaleX(1.0120);">2,500.00</div>
<div class="t" style="left:211.00px;top:307.07px;font-size:14px;color:#1a1a1a;transform:scaleX(0.7692);">$</div>
<div class="t" style="left:239.21px;top:307.99px;font-size:11.5px;color:#111;transform:scaleX(1.0120);">1,200.00</div>
<div class="t" style="left:298.00px;top:307.07px;font-size:14px;color:#1a1a1a;transform:scaleX(0.7692);">$</div>
<div class="t" style="left:360.18px;top:307.99px;font-size:11.5px;color:#111;transform:scaleX(1.0120);">500.00</div>
<div class="t" style="left:404.74px;top:307.99px;font-size:11.5px;color:#111;transform:scaleX(1.1000);">6/17/2020</div>
<div class="t" style="left:470.30px;top:307.99px;font-size:11.5px;color:#111;">Soon</div>
<div class="t" style="left:518.50px;top:307.99px;font-size:11.5px;color:#111;">No</div>
<div class="t" style="left:26.90px;top:325.76px;font-size:11.5px;color:#111;">Presents</div>
<div class="t" style="left:98.30px;top:324.84px;font-size:14px;color:#1a1a1a;transform:scaleX(0.7692);">$</div>
<div class="t" style="left:168.35px;top:325.76px;font-size:11.5px;color:#111;transform:scaleX(1.0120);">80.00</div>
<div class="t" style="left:211.00px;top:324.84px;font-size:14px;color:#1a1a1a;transform:scaleX(0.7692);">$</div>
<div class="t" style="left:255.35px;top:325.76px;font-size:11.5px;color:#111;transform:scaleX(1.0120);">80.00</div>
<div class="t" style="left:298.00px;top:324.84px;font-size:14px;color:#1a1a1a;transform:scaleX(0.7692);">$</div>
<div class="t" style="left:360.18px;top:325.76px;font-size:11.5px;color:#111;transform:scaleX(1.0120);">100.00</div>
<div class="t" style="left:404.74px;top:325.76px;font-size:11.5px;color:#111;transform:scaleX(1.1000);">6/15/2020</div>
<div class="t" style="left:470.30px;top:325.76px;font-size:11.5px;color:#111;">Now</div>
<div class="t" style="left:518.50px;top:325.76px;font-size:11.5px;color:#111;">Yes</div>
<div class="a" style="left:514.80px;top:213.50px;width:89.40px;height:19.60px;border:1.6px solid #2f6e49"></div>
<div class="a" style="left:601.20px;top:230.50px;width:3.60px;height:3.60px;background:#2f6e49"></div></body></html>
